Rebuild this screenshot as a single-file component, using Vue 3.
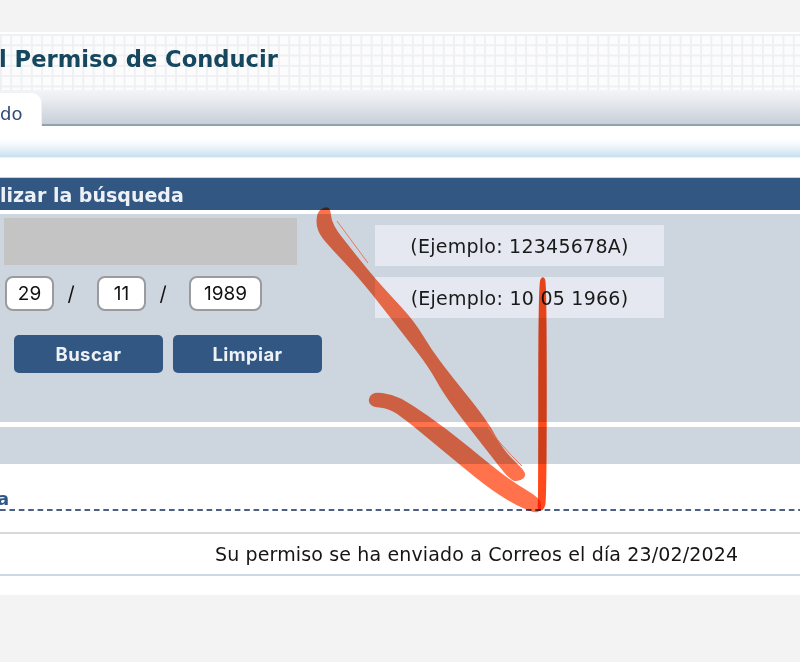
<script setup>
// date fields shown in the search form
const dateParts = [
  { value: '29', cls: 'short' },
  { value: '11', cls: 'short' },
  { value: '1989', cls: 'long' }
]
const examples = ['(Ejemplo: 12345678A)', '(Ejemplo: 10 05 1966)']

// closed brush shape: each corner is rounded through the midpoints of its sides
const brush = (pts) => {
  const mid = (a, b) => [(a[0] + b[0]) / 2, (a[1] + b[1]) / 2]
  const start = mid(pts[pts.length - 1], pts[0])
  let d = `M${start[0]} ${start[1]}`
  pts.forEach((p, i) => {
    const m = mid(p, pts[(i + 1) % pts.length])
    d += ` Q${p[0]} ${p[1]} ${m[0]} ${m[1]}`
  })
  return d + ' Z'
}

const longStroke = brush([
  [326, 208], [329, 210], [330, 221], [336, 232], [343, 241], [370, 275], [389, 296], [413, 322],
  [430, 350], [447, 373], [485, 420], [500, 447], [510, 459], [526, 474], [519, 480], [511, 479],
  [490, 452], [447, 397], [430, 366], [405, 334], [363, 280], [330, 245], [318, 230], [318, 213]
])
const lowerStroke = brush([
  [372, 393], [392, 396], [407, 403], [447, 431], [487, 464], [513, 484], [539, 499],
  [540, 509], [535, 512], [513, 502], [487, 485], [447, 452], [407, 419], [390, 407], [369, 405]
])
const upStroke = brush([
  [539, 284], [543, 276], [546, 284], [546, 500], [543, 510], [538, 510], [539, 498]
])
</script>

<template>
  <div class="page">
    <div class="top-gap"></div>
    <div class="sheet">
      <div class="title-bar">
        <h1>l Permiso de Conducir</h1>
      </div>
      <div class="tabs">
        <div class="tab">do</div>
      </div>
      <div class="tab-foot"></div>

      <div class="section-head">lizar la búsqueda</div>
      <div class="search-panel">
        <div class="form-col">
          <div class="hidden-field"></div>
          <div class="date-row">
            <template v-for="(part, i) in dateParts" :key="part.value">
              <div :class="['date-input', part.cls]">{{ part.value }}</div>
              <span v-if="i < 2" class="slash">/</span>
            </template>
          </div>
          <div class="buttons">
            <button class="btn">Buscar</button>
            <button class="btn">Limpiar</button>
          </div>
        </div>
        <div class="hint-col">
          <div v-for="text in examples" :key="text" class="hint">{{ text }}</div>
        </div>
      </div>
      <div class="grey-strip"></div>

      <div class="result-title"><span>a</span></div>
      <div class="result-row">Su permiso se ha enviado a Correos el día 23/02/2024</div>
    </div>

    <!-- trazos rojos dibujados a mano sobre la captura -->
    <svg class="scribble" width="800" height="662" viewBox="0 0 800 662">
      <path class="ink" :d="longStroke" />
      <path class="ink" :d="lowerStroke" />
      <path class="ink strong" :d="upStroke" />
      <path class="thin" d="M337 221 L368 263" />
      <path class="thin" d="M485 423 Q500 445 522 466" />
    </svg>
  </div>
</template>

<style>
body {
  margin: 0;
  background: #f4f3f3;
}
</style>

<style scoped>
.page {
  position: relative;
  width: 800px;
  height: 662px;
  overflow: hidden;
  background: #f4f3f3;
  font-family: "DejaVu Sans", Verdana, sans-serif;
}

.top-gap {
  height: 32px;
}

.sheet {
  height: 563px;
  background: #fff;
}

/* cabecera con cuadricula */
.title-bar {
  height: 58px;
  border-top: 2px solid #fff;
  box-sizing: border-box;
  background-color: #fcfcfd;
  background-image:
    linear-gradient(90deg, #eef0f3 1.5px, transparent 1.5px),
    linear-gradient(#eef0f3 1.5px, transparent 1.5px);
  background-size: 10.3px 10.3px;
  display: flex;
  align-items: center;
}

.title-bar h1 {
  margin: 0 0 7px -1px;
  font-size: 22.6px;
  font-weight: 700;
  color: #15475f;
  white-space: nowrap;
}

.tabs {
  height: 36px;
  box-sizing: border-box;
  padding-top: 3px;
  border-bottom: 2px solid #8fa2af;
  background: linear-gradient(#f3f4f7, #ebedf1 25%, #c8cfd8);
}

.tab {
  width: 41px;
  height: 47px;
  box-sizing: border-box;
  padding: 10px 20px 0 0;
  background: #fff;
  border-top-right-radius: 9px;
  font-size: 18px;
  color: #2f4a78;
  text-align: right;
  box-shadow: 1px 0 0 #eef0f3;
}

.tab-foot {
  height: 32px;
  margin-bottom: 19px;
  background: linear-gradient(#fff 40%, #f3f8fc 60%, #c9e1f1 96%, #fff 100%);
}

.section-head {
  height: 33px;
  line-height: 34px;
  background: #315782;
  color: #edf1f5;
  font-size: 19px;
  font-weight: 700;
  white-space: nowrap;
  border-top: 1px solid #c8d0e0;
  box-sizing: border-box;
}

.search-panel {
  height: 208px;
  margin-top: 4px;
  background: #cdd5de;
  display: flex;
}

.form-col {
  width: 375px;
  padding: 4px 0 0 4px;
  box-sizing: border-box;
}

.hidden-field {
  width: 293px;
  height: 47px;
  background: #c4c4c4;
}

.date-row {
  display: flex;
  align-items: center;
  margin: 11px 0 0 1px;
  font-family: Inter, "Liberation Sans", sans-serif;
}

.date-input {
  height: 35px;
  box-sizing: border-box;
  background: #fff;
  border: 2px solid #9a9b9f;
  border-radius: 8px;
  font-size: 19px;
  line-height: 31px;
  color: #111;
  text-align: center;
}

.date-input.short {
  width: 49px;
}

.date-input.long {
  width: 73px;
}

.slash {
  width: 43px;
  box-sizing: border-box;
  padding-right: 9px;
  text-align: center;
  font-size: 20px;
  color: #111;
}

.buttons {
  display: flex;
  gap: 10px;
  margin: 24px 0 0 10px;
}

.btn {
  width: 149px;
  height: 38px;
  padding: 0;
  border: none;
  border-radius: 5px;
  background: #315782;
  color: #eef2f6;
  font-family: Inter, "Liberation Sans", sans-serif;
  font-size: 18.5px;
  font-weight: 700;
  letter-spacing: 0.4px;
}

.hint-col {
  padding-top: 11px;
  display: flex;
  flex-direction: column;
  gap: 11px;
}

.hint {
  width: 289px;
  height: 41px;
  line-height: 43px;
  background: #e5e8f1;
  color: #1a1a1a;
  font-size: 19px;
  letter-spacing: 0.25px;
  text-align: center;
}

.grey-strip {
  height: 37px;
  margin-top: 5px;
  background: #cdd5de;
}

.result-title {
  height: 47px;
  box-sizing: border-box;
  padding-top: 24px;
  background: linear-gradient(90deg, #4c6086 6px, transparent 6px) 0 100% / 9.4px 2px repeat-x;
  font-size: 18px;
  font-weight: 700;
  line-height: 22px;
  color: #2f5687;
}

.result-title span {
  margin-left: -3px;
}

.result-row {
  height: 44px;
  margin-top: 21px;
  box-sizing: border-box;
  border-top: 2px solid #d6d8db;
  border-bottom: 2px solid #ccd9e5;
  padding-left: 215px;
  line-height: 40px;
  font-size: 19px;
  letter-spacing: 0.14px;
  color: #151515;
  white-space: nowrap;
}

.scribble {
  position: absolute;
  top: 0;
  left: 0;
  pointer-events: none;
}

.ink {
  fill: #ff6238;
  stroke: #ff6238;
  stroke-width: 3;
  stroke-linejoin: round;
  opacity: 0.9;
  mix-blend-mode: multiply;
}

.ink.strong {
  fill: #ff4a1c;
  stroke: #ff4a1c;
  stroke-width: 1.5;
  opacity: 1;
}

.thin {
  fill: none;
  stroke: #e8795f;
  stroke-width: 1;
}
</style>
